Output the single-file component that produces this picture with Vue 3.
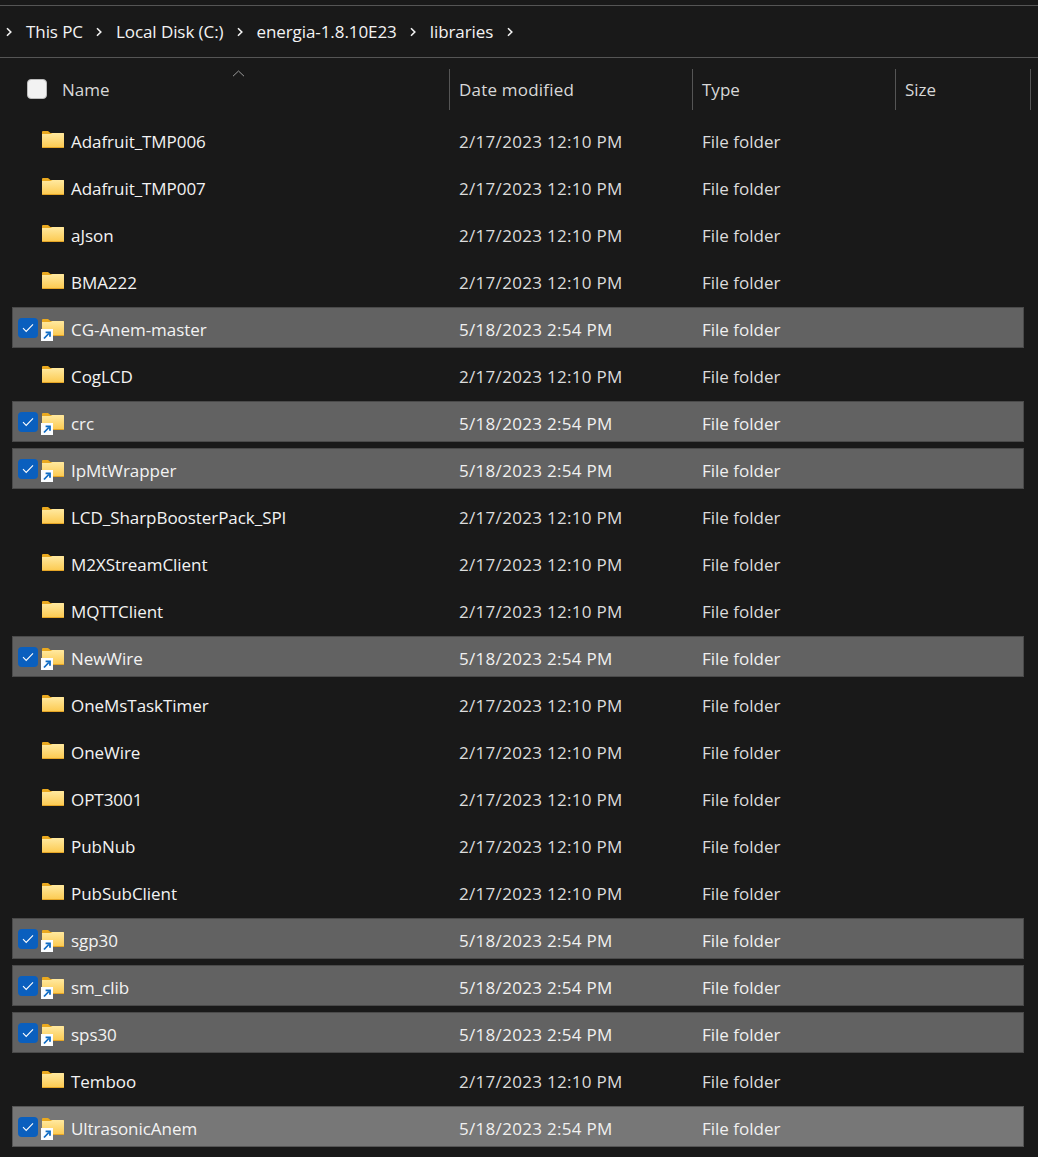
<script setup>
const crumbs = ['This PC', 'Local Disk (C:)', 'energia-1.8.10E23', 'libraries']
const columns = [
  { label: 'Name', cls: 'h-name' },
  { label: 'Date modified', cls: 'h-date' },
  { label: 'Type', cls: 'h-type' },
  { label: 'Size', cls: 'h-size' }
]
const oldDate = '2/17/2023 12:10 PM'
const newDate = '5/18/2023 2:54 PM'
const rows = [
  ['Adafruit_TMP006'], ['Adafruit_TMP007'], ['aJson'], ['BMA222'],
  ['CG-Anem-master', 1], ['CogLCD'], ['crc', 1], ['IpMtWrapper', 1],
  ['LCD_SharpBoosterPack_SPI'], ['M2XStreamClient'], ['MQTTClient'], ['NewWire', 1],
  ['OneMsTaskTimer'], ['OneWire'], ['OPT3001'], ['PubNub'], ['PubSubClient'],
  ['sgp30', 1], ['sm_clib', 1], ['sps30', 1], ['Temboo'], ['UltrasonicAnem', 2]
].map(([name, state]) => ({
  name,
  selected: !!state,
  hover: state === 2,
  date: state ? newDate : oldDate
}))
</script>

<template>
  <div class="page">
    <nav class="crumbs">
      <template v-for="c in crumbs" :key="c">
        <svg class="chev" width="8" height="10" viewBox="0 0 8 10"><path d="M2 1.2 5.8 5 2 8.8" fill="none" stroke="#f2f2f2" stroke-width="1.6" /></svg>
        <span class="crumb">{{ c }}</span>
      </template>
      <svg class="chev" width="8" height="10" viewBox="0 0 8 10"><path d="M2 1.2 5.8 5 2 8.8" fill="none" stroke="#f2f2f2" stroke-width="1.6" /></svg>
    </nav>

    <header class="head">
      <span class="head-check"></span>
      <svg class="sort" width="13" height="7" viewBox="0 0 13 7"><path d="M1 6.2 6.5 1 12 6.2" fill="none" stroke="#9a9a9a" stroke-width="1" /></svg>
      <div v-for="col in columns" :key="col.label" class="hcell" :class="col.cls">{{ col.label }}</div>
    </header>

    <main class="list">
      <div v-for="r in rows" :key="r.name" class="row" :class="{ selected: r.selected, hover: r.hover }">
        <div class="c-name">
          <span v-if="r.selected" class="check">
            <svg width="12" height="10" viewBox="0 0 12 10"><path d="M1 5.2 4.2 8.4 11 1.4" fill="none" stroke="#fff" stroke-width="1.1" /></svg>
          </span>
          <span class="icon">
            <svg width="22" height="17" viewBox="0 0 22 17">
              <defs>
                <linearGradient id="fold" x1="0" y1="0" x2="0" y2="1">
                  <stop offset="0" stop-color="#ffe9a0" />
                  <stop offset="1" stop-color="#fcc94e" />
                </linearGradient>
              </defs>
              <path d="M0 1a1 1 0 0 1 1-1h5l2.4 2H22v3H0z" fill="#eaa91f" />
              <path d="M0 3h8.5l2-1H21a1 1 0 0 1 1 1v13a1 1 0 0 1-1 1H1a1 1 0 0 1-1-1z" fill="url(#fold)" />
              <path d="M0 16h22a1 1 0 0 1-1 1H1a1 1 0 0 1-1-1z" fill="#e5a526" />
            </svg>
            <span v-if="r.selected" class="link">
              <svg width="10" height="10" viewBox="0 0 10 10"><path d="M2 8.5 6.8 3.5M3.6 2.4H8V6.8" fill="none" stroke="#0f6cc4" stroke-width="1.8" /></svg>
            </span>
          </span>
          <span class="name">{{ r.name }}</span>
        </div>
        <div class="c-date">{{ r.date }}</div>
        <div class="c-type">File folder</div>
      </div>
    </main>
  </div>
</template>

<style scoped>
.page {
  position: relative;
  width: 1038px;
  height: 1157px;
  overflow: hidden;
  background: #191919;
  color: #f3f3f3;
  font-family: "Open Sans", "Noto Sans", sans-serif;
  font-size: 17px;
}
.crumbs {
  display: flex;
  align-items: center;
  box-sizing: border-box;
  height: 53px;
  margin-top: 5px;
  padding-left: 5px;
  border-top: 1px solid #555;
  border-bottom: 1px solid #555;
}
.chev { flex: none; margin-top: 1px; }
.crumb { margin: 0 12.5px; white-space: nowrap; letter-spacing: -0.08px; }
.crumb:first-of-type { margin-left: 13px; }
.head {
  position: relative;
  display: flex;
  height: 61px;
  color: #d8d8d8;
}
.head-check {
  position: absolute;
  left: 27px;
  top: 21px;
  width: 20px;
  height: 20px;
  box-sizing: border-box;
  background: #f2f2f2;
  border: 1px solid #bbb;
  border-radius: 4px;
}
.sort { position: absolute; left: 232px; top: 12px; }
.hcell {
  box-sizing: border-box;
  height: 41px;
  margin-top: 11px;
  padding-left: 9px;
  line-height: 42px;
  border-right: 1px solid #555;
}
.h-name { width: 450px; padding-left: 62px; }
.h-date { width: 243px; letter-spacing: 0.2px; }
.h-type { width: 203px; }
.h-size { width: 135px; }
.list {
  display: flex;
  flex-direction: column;
  gap: 6px;
  margin: 0 14px 0 12px;
}
.row {
  display: flex;
  align-items: center;
  box-sizing: border-box;
  height: 41px;
  border: 1px solid transparent;
  color: #f3f3f3;
}
.row.selected { background: #626262; border-color: #4a4a4a; }
.row.hover { background: #777; border-color: #555; }
.c-name {
  display: flex;
  align-items: center;
  width: 446px;
  position: relative;
  padding-left: 29px;
  box-sizing: border-box;
}
.check {
  position: absolute;
  left: 5px;
  top: calc(50% - 9.5px);
  display: flex;
  align-items: center;
  justify-content: center;
  width: 20px;
  height: 20px;
  background: #0a5fbe;
  border-radius: 4px;
}
.icon { position: relative; display: flex; width: 22px; height: 17px; flex: none; }
.link {
  position: absolute;
  left: -1px;
  top: 10px;
  display: flex;
  align-items: center;
  justify-content: center;
  width: 12px;
  height: 12px;
  background: #fbfdff;
}
.name { margin-left: 7px; padding-top: 3px; white-space: nowrap; letter-spacing: -0.05px; }
.c-date { width: 243px; padding-top: 3px; color: #dcdcdc; letter-spacing: 0.3px; }
.c-type { padding-top: 3px; color: #dcdcdc; }
.row.selected .c-date, .row.selected .c-type { color: #f0f0f0; }
</style>
